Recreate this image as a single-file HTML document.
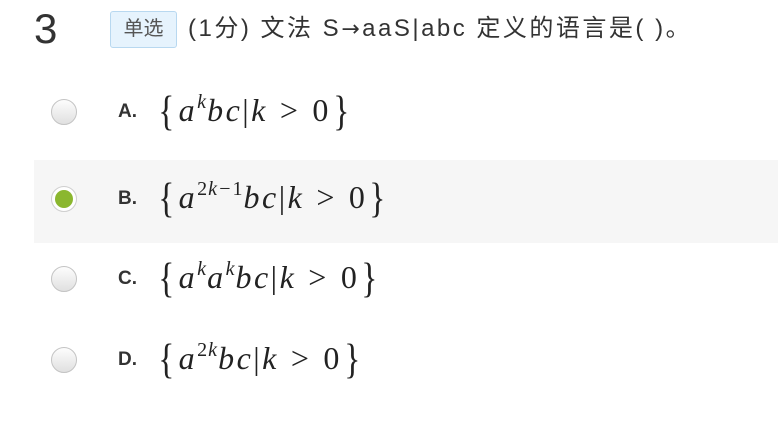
<!DOCTYPE html>
<html><head><meta charset="utf-8"><style>
body{margin:0;width:778px;height:422px;background:#fff;position:relative;overflow:hidden;font-family:"Liberation Sans","Noto Sans CJK SC",sans-serif;color:#333}
.num{position:absolute;left:34px;top:5px;font-size:42px;color:#333}
.badge{position:absolute;left:110px;top:11px;width:67px;height:37px;box-sizing:border-box;border:1px solid #b8d8f0;background:#e6f3fd;border-radius:3px;color:#555;font-size:20px;line-height:35px;text-align:center}
.q{position:absolute;left:188px;top:13px;font-size:24px;line-height:32px;color:#333;white-space:nowrap;letter-spacing:2.5px}
.ar{font-family:"DejaVu Sans",sans-serif;font-size:22px}
.hl{position:absolute;left:34px;top:160px;width:744px;height:83px;background:#f6f6f6}
.radio{position:absolute;left:51px;width:26px;height:26px;border-radius:50%;border:1px solid #c4c4c4;box-sizing:border-box;background:linear-gradient(#fdfdfd,#e0e0e0)}
.radio.on{background:#fff;border-color:#cfcfcf}
.radio.on:after{content:"";position:absolute;left:3px;top:3px;width:18px;height:18px;border-radius:50%;background:#8bb72f}
.lbl{position:absolute;left:118px;font-weight:bold;font-size:19px;color:#333}
.m{position:absolute;left:156px;font-family:"Liberation Serif","DejaVu Serif",serif;font-size:32px;color:#222;white-space:nowrap;letter-spacing:2.5px}
.m i{font-style:italic}
.m sup{font-size:20px;vertical-align:13px;font-style:italic;letter-spacing:1px}
.br{font-size:42px;vertical-align:-4px;font-style:normal;display:inline-block;transform:scaleX(0.8)}
.sp{padding:0 12px}
</style></head><body>
<div class="num">3</div>
<div class="badge">单选</div>
<div class="q">(1分) 文法 S<span class="ar">→</span>aaS|abc 定义的语言是( )。</div>
<div class="hl"></div>

<div class="radio" style="top:99px"></div>
<div class="lbl" style="top:101px">A.</div>
<div class="m" style="top:88px"><span class="br">{</span><i>a</i><sup>k</sup><i>bc</i>|<i>k</i><span class="sp">&gt;</span>0<span class="br">}</span></div>

<div class="radio on" style="top:186px"></div>
<div class="lbl" style="top:188px">B.</div>
<div class="m" style="top:175px"><span class="br">{</span><i>a</i><sup><span style="font-style:normal">2</span>k−<span style="font-style:normal">1</span></sup><i>bc</i>|<i>k</i><span class="sp">&gt;</span>0<span class="br">}</span></div>

<div class="radio" style="top:266px"></div>
<div class="lbl" style="top:268px">C.</div>
<div class="m" style="top:255px"><span class="br">{</span><i>a</i><sup>k</sup><i>a</i><sup>k</sup><i>bc</i>|<i>k</i><span class="sp">&gt;</span>0<span class="br">}</span></div>

<div class="radio" style="top:347px"></div>
<div class="lbl" style="top:349px">D.</div>
<div class="m" style="top:336px"><span class="br">{</span><i>a</i><sup><span style="font-style:normal">2</span>k</sup><i>bc</i>|<i>k</i><span class="sp">&gt;</span>0<span class="br">}</span></div>
</body></html>
